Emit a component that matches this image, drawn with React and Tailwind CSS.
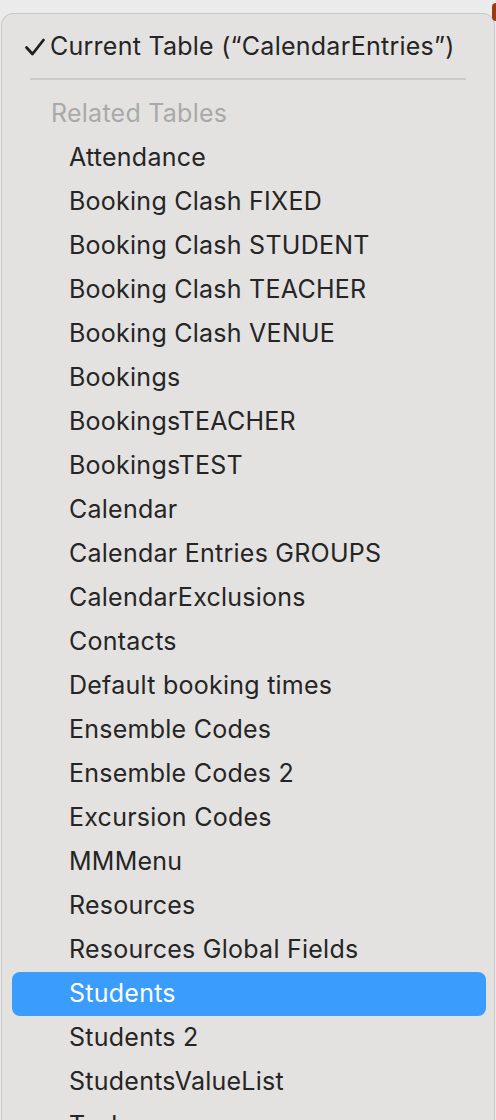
import React from "react";

const tables = [
  "Attendance",
  "Booking Clash FIXED",
  "Booking Clash STUDENT",
  "Booking Clash TEACHER",
  "Booking Clash VENUE",
  "Bookings",
  "BookingsTEACHER",
  "BookingsTEST",
  "Calendar",
  "Calendar Entries GROUPS",
  "CalendarExclusions",
  "Contacts",
  "Default booking times",
  "Ensemble Codes",
  "Ensemble Codes 2",
  "Excursion Codes",
  "MMMenu",
  "Resources",
  "Resources Global Fields",
  "Students",
  "Students 2",
  "StudentsValueList",
  "Tasks",
];

function Check() {
  return (
    <svg width="22" height="18" viewBox="0 0 22 18" className="shrink-0">
      <path d="M2.5 9.5 L8.5 16 L19.5 2" fill="none" stroke="#1f1f1f" strokeWidth="2.8" strokeLinecap="round" strokeLinejoin="round" />
    </svg>
  );
}

export default function App() {
  return (
    <div className="relative w-[496px] h-[1120px] overflow-hidden bg-[#ebebeb]" style={{ fontFamily: "Inter, 'Noto Sans', sans-serif" }}>
      <div className="absolute right-0 top-[3px] w-[4px] h-[18px] bg-[#9c3a14] rounded-l-sm" />
      <div className="mt-[13px] ml-[1px] w-[494px] h-[1200px] rounded-t-[12px] border border-[#c6c6c6] bg-[#e3e2e1] pt-[11px] text-[25px] tracking-[0.25px] text-[#252525]">
        <div className="h-[44px] flex items-center pl-[22px] gap-[4px]">
          <Check />
          <span className="whitespace-nowrap">Current Table (“CalendarEntries”)</span>
        </div>
        <div className="mt-[9px] mb-[12px] mx-[28px] h-[2px] bg-[#cbcac8]" />
        <div className="h-[44px] flex items-center pl-[49px] text-[#a9a9a9]">Related Tables</div>
        {tables.map(t =>
          t === "Students" ? (
            <div key={t} className="h-[44px] flex items-center ml-[10px] mr-[8px] pl-[57px] rounded-[8px] bg-[#3a9cfd] text-white">{t}</div>
          ) : (
            <div key={t} className="h-[44px] flex items-center pl-[67px]">{t}</div>
          )
        )}
      </div>
    </div>
  );
}
